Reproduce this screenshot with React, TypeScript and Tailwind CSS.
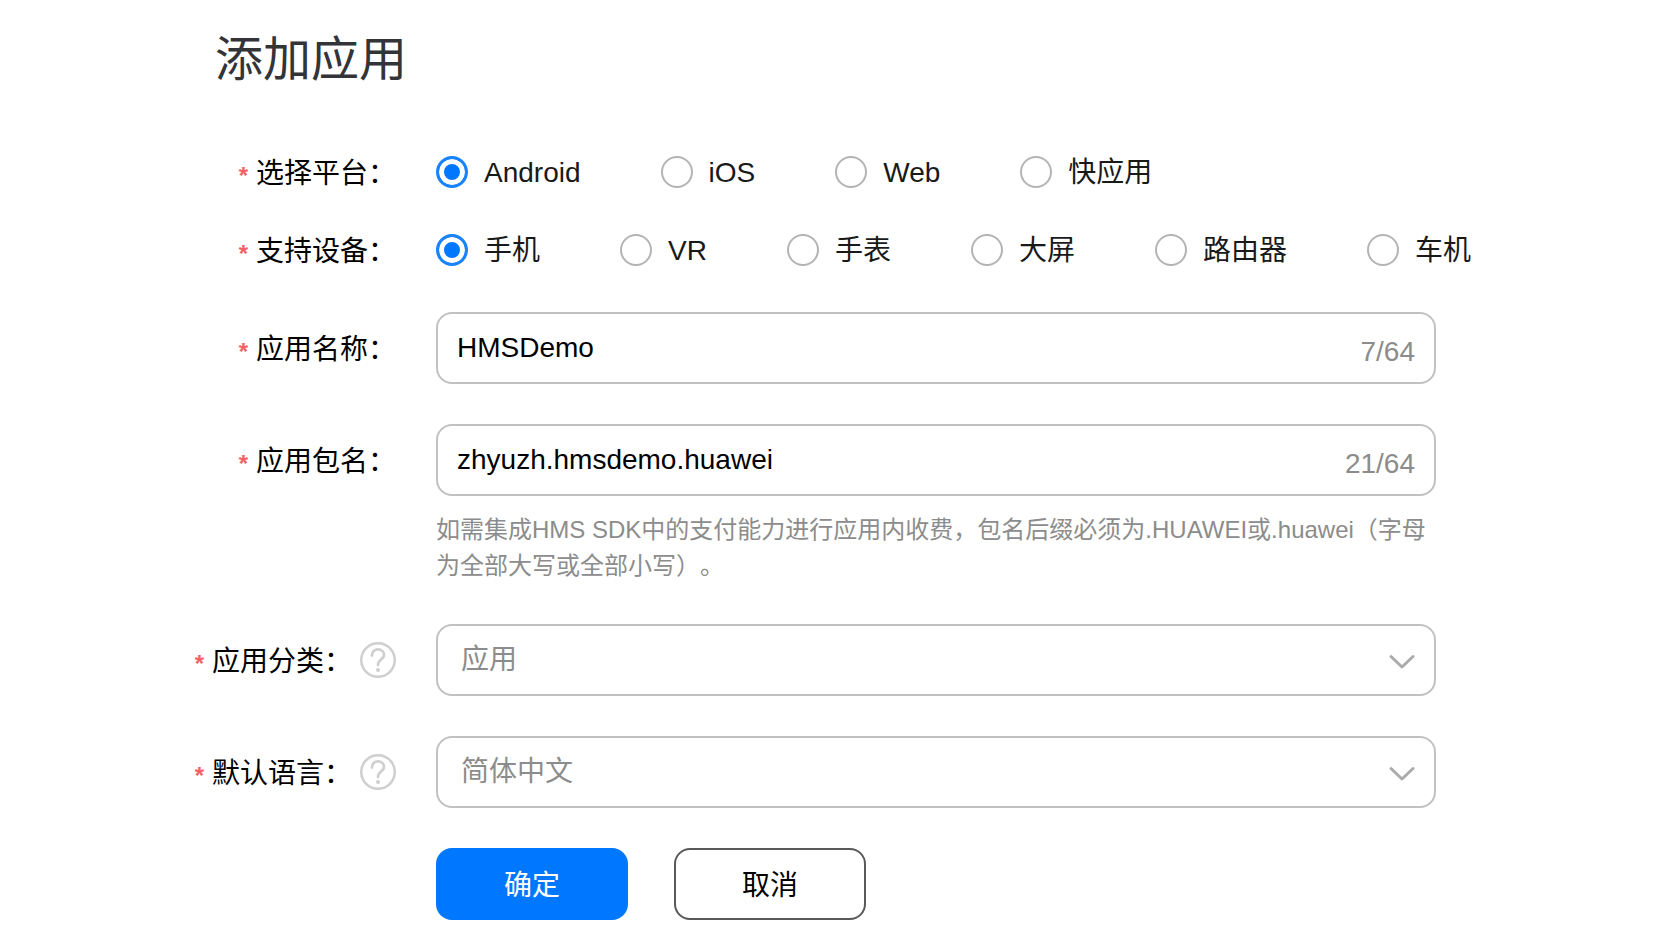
import { useState } from 'react'
import type { ReactNode } from 'react'

const PLATFORMS = ['Android', 'iOS', 'Web', '快应用']
const DEVICES = ['手机', 'VR', '手表', '大屏', '路由器', '车机']
const CATEGORIES = ['应用', '游戏']
const LANGUAGES = ['简体中文', '英语']
const MAX_LENGTH = 64

function HelpIcon() {
  return (
    <svg width="36" height="36" viewBox="0 0 36 36" fill="none" stroke="#cfcfcf" strokeLinecap="round" aria-hidden="true">
      <circle cx="18" cy="18" r="16.75" strokeWidth="2.5" />
      <path d="M12 13.5C12 9.8 14.6 7.4 18 7.4C21.4 7.4 24 9.8 24 12.9C24 17.2 18 17.6 18 23" strokeWidth="2.8" />
      <circle cx="18" cy="28" r="2" fill="#cfcfcf" stroke="none" />
    </svg>
  )
}

interface FormRowProps {
  id: string
  label: string
  group?: boolean
  help?: boolean
  className?: string
  children: ReactNode
}

/**
 * One line of the form: required mark, label, optional help button, field
 */
function FormRow({ id, label, group = false, help = false, className = 'min-h-[72px]', children }: FormRowProps) {
  return (
    <div className="flex items-start gap-10">
      <div className={`flex w-[396px] shrink-0 items-center justify-end ${className}`}>
        <span aria-hidden="true" className="mr-2 pt-2 text-2xl leading-7 font-bold text-[#f56066]">*</span>
        {group ? (
          <span id={`${id}-label`} className="pt-1">{label}：</span>
        ) : (
          <label htmlFor={id} className="pt-1">{label}：</label>
        )}
        {help && (
          <button type="button" aria-label={`${label}说明`} className="ml-2 cursor-pointer">
            <HelpIcon />
          </button>
        )}
      </div>
      <div className="min-w-0 flex-1">{children}</div>
    </div>
  )
}

interface RadioRowProps {
  name: string
  options: string[]
  value: string
  onChange: (value: string) => void
}

function RadioRow({ name, options, value, onChange }: RadioRowProps) {
  return (
    <div role="radiogroup" aria-labelledby={`${name}-label`} className="flex flex-wrap gap-x-20 text-[#191919]">
      {options.map(option => (
        <label key={option} className="flex min-h-10 cursor-pointer items-center gap-4 whitespace-nowrap">
          <input
            type="radio"
            name={name}
            value={option}
            checked={value === option}
            onChange={() => onChange(option)}
            className="size-8 shrink-0 appearance-none rounded-full border-2 border-[#b4b4b4] bg-white checked:border-3 checked:border-[#1a83fb] checked:bg-[#0077ff] checked:shadow-[inset_0_0_0_5px_#fff]"
          />
          <span className="pt-0.5">{option}</span>
        </label>
      ))}
    </div>
  )
}

interface TextFieldProps {
  id: string
  value: string
  onChange: (value: string) => void
}

function TextField({ id, value, onChange }: TextFieldProps) {
  return (
    <div className="flex h-[72px] max-w-[1000px] items-center rounded-2xl border-2 border-[#c1c1c1] px-[19px]">
      <input
        id={id}
        type="text"
        maxLength={MAX_LENGTH}
        value={value}
        onChange={e => onChange(e.target.value)}
        className="min-w-0 flex-1 bg-transparent outline-none"
      />
      <span className="pt-2 text-[#8c8c8c]">{value.length}/{MAX_LENGTH}</span>
    </div>
  )
}

interface SelectFieldProps {
  id: string
  options: string[]
}

function SelectField({ id, options }: SelectFieldProps) {
  return (
    <div className="relative max-w-[1000px]">
      <select
        id={id}
        className="block h-[72px] w-full appearance-none rounded-2xl border-2 border-[#c1c1c1] bg-white px-[23px] text-[#8c8c8c] outline-none"
      >
        {options.map(option => (
          <option key={option}>{option}</option>
        ))}
      </select>
      <svg
        width="26"
        height="16"
        viewBox="0 0 26 16"
        fill="none"
        className="pointer-events-none absolute top-[30px] right-[21px]"
      >
        <path d="M2 2.5L13 13L24 2.5" stroke="#ababab" strokeWidth="3" strokeLinejoin="round" strokeLinecap="round" />
      </svg>
    </div>
  )
}

export default function App() {
  const [platform, setPlatform] = useState('Android')
  const [device, setDevice] = useState('手机')
  const [appName, setAppName] = useState('HMSDemo')
  const [packageName, setPackageName] = useState('zhyuzh.hmsdemo.huawei')

  return (
    <main className="min-h-screen bg-white pb-8 font-['Liberation_Sans','Noto_Sans_CJK_SC',sans-serif] text-[28px] leading-9 text-black">
      <h1 className="pt-7 pl-[215px] text-5xl leading-16 text-[#333438]">添加应用</h1>

      <form onSubmit={e => e.preventDefault()} className="mt-[60px] flex flex-col gap-10">
        <div className="mb-0.5 flex flex-col gap-[38px]">
          <FormRow id="platform" label="选择平台" group className="min-h-10">
            <RadioRow name="platform" options={PLATFORMS} value={platform} onChange={setPlatform} />
          </FormRow>
          <FormRow id="device" label="支持设备" group className="min-h-10">
            <RadioRow name="device" options={DEVICES} value={device} onChange={setDevice} />
          </FormRow>
        </div>

        <FormRow id="app-name" label="应用名称">
          <TextField id="app-name" value={appName} onChange={setAppName} />
        </FormRow>

        <FormRow id="package-name" label="应用包名">
          <TextField id="package-name" value={packageName} onChange={setPackageName} />
          <p className="mt-4 max-w-[1000px] text-2xl leading-9 text-[#8c8c8c] [text-spacing-trim:space-all]">
            如需集成HMS SDK中的支付能力进行应用内收费，包名后缀必须为.HUAWEI或.huawei（字母为全部大写或全部小写）。
          </p>
        </FormRow>

        <FormRow id="category" label="应用分类" help>
          <SelectField id="category" options={CATEGORIES} />
        </FormRow>

        <FormRow id="language" label="默认语言" help>
          <SelectField id="language" options={LANGUAGES} />
        </FormRow>

        <div className="flex gap-[46px] pl-[436px]">
          <button type="submit" className="h-[72px] w-48 cursor-pointer rounded-2xl bg-[#0077ff] pt-1 text-white">
            确定
          </button>
          <button type="button" className="h-[72px] w-48 cursor-pointer rounded-2xl border-2 border-[#595959] bg-white pt-1">
            取消
          </button>
        </div>
      </form>
    </main>
  )
}
